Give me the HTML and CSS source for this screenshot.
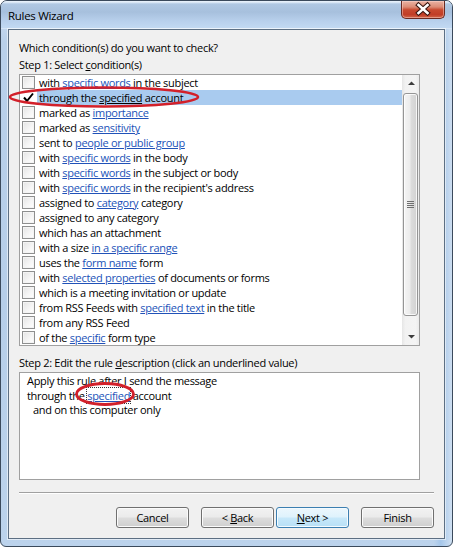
FILE: index.html
```html
<!DOCTYPE html>
<html>
<head>
<meta charset="utf-8">
<link rel="stylesheet" href="styles.css">
</head>
<body>
<div class="window">
  <div class="titlebar">
    <span class="title">Rules Wizard</span>
    <div class="close">
      <svg width="44" height="18" viewBox="0 0 44 18">
        <path d="M17.5 5 L26.5 13 M26.5 5 L17.5 13" stroke="#3a1610" stroke-width="4.6" stroke-linecap="square" fill="none"/>
        <path d="M17.5 5 L26.5 13 M26.5 5 L17.5 13" stroke="#ffffff" stroke-width="2.6" stroke-linecap="square" fill="none"/>
      </svg>
    </div>
  </div>
  <div class="client">
    <div class="line">Which condition(s) do you want to check?</div>
    <div class="line step1">Step 1: Select <u>c</u>ondition(s)</div>
    <div class="listbox">
      <div class="items">
        <div class="row"><span class="cb"></span><span class="txt">with <span class="lk">specific words</span> in the subject</span></div>
        <div class="row sel"><span class="cb checked"><svg width="13" height="13" viewBox="0 0 13 13"><path d="M2 6.5 L5 10 L11 2.5" stroke="#000" stroke-width="2" fill="none"/></svg></span><span class="txt">through the <u>specified</u> account</span></div>
        <div class="row"><span class="cb"></span><span class="txt">marked as <span class="lk">importance</span></span></div>
        <div class="row"><span class="cb"></span><span class="txt">marked as <span class="lk">sensitivity</span></span></div>
        <div class="row"><span class="cb"></span><span class="txt">sent to <span class="lk">people or public group</span></span></div>
        <div class="row"><span class="cb"></span><span class="txt">with <span class="lk">specific words</span> in the body</span></div>
        <div class="row"><span class="cb"></span><span class="txt">with <span class="lk">specific words</span> in the subject or body</span></div>
        <div class="row"><span class="cb"></span><span class="txt">with <span class="lk">specific words</span> in the recipient's address</span></div>
        <div class="row"><span class="cb"></span><span class="txt">assigned to <span class="lk">category</span> category</span></div>
        <div class="row"><span class="cb"></span><span class="txt">assigned to any category</span></div>
        <div class="row"><span class="cb"></span><span class="txt">which has an attachment</span></div>
        <div class="row"><span class="cb"></span><span class="txt">with a size <span class="lk">in a specific range</span></span></div>
        <div class="row"><span class="cb"></span><span class="txt">uses the <span class="lk">form name</span> form</span></div>
        <div class="row"><span class="cb"></span><span class="txt">with <span class="lk">selected properties</span> of documents or forms</span></div>
        <div class="row"><span class="cb"></span><span class="txt">which is a meeting invitation or update</span></div>
        <div class="row"><span class="cb"></span><span class="txt">from RSS Feeds with <span class="lk">specified text</span> in the title</span></div>
        <div class="row"><span class="cb"></span><span class="txt">from any RSS Feed</span></div>
        <div class="row"><span class="cb"></span><span class="txt">of the <span class="lk">specific</span> form type</span></div>
      </div>
      <div class="scrollbar">
        <div class="sb-btn"><svg width="17" height="17" viewBox="0 0 17 17"><path d="M6 10 L9.5 6.5 L13 10 Z" fill="#3c3c3c"/></svg></div>
        <div class="thumb">
          <svg width="7" height="7" viewBox="0 0 7 7"><path d="M0 0.5 H7 M0 2.5 H7 M0 4.5 H7 M0 6.5 H7" stroke="#6f6f6f" stroke-width="1"/></svg>
        </div>
        <div class="track"></div>
        <div class="sb-btn"><svg width="17" height="17" viewBox="0 0 17 17"><path d="M6 7 L9.5 10.5 L13 7 Z" fill="#3c3c3c"/></svg></div>
      </div>
    </div>
    <div class="line step2">Step 2: Edit the rule <u>d</u>escription (click an underlined value)</div>
    <div class="desc">
      <div>Apply this rule after I send the message</div>
      <div>through the <span class="lk focus">specified</span> account</div>
      <div class="indent">and on this computer only</div>
    </div>
    <div class="sep"></div>
    <div class="buttons">
      <div class="btn"><span>Cancel</span></div>
      <div class="btn back"><span>&lt; <u>B</u>ack</span></div>
      <div class="btn next default"><span><u>N</u>ext &gt;</span></div>
      <div class="btn finish"><span>Finish</span></div>
    </div>
  </div>
  <svg class="mark mark1" width="196" height="26" viewBox="0 0 196 26"><ellipse cx="97" cy="13" rx="94" ry="9.5" fill="none" stroke="#d2202a" stroke-width="2.6"/></svg>
  <svg class="mark mark2" width="66" height="30" viewBox="0 0 66 30"><ellipse cx="33" cy="15" rx="28.5" ry="10.5" fill="none" stroke="#d2202a" stroke-width="2.8"/></svg>
</div>
</body>
</html>
```

FILE: styles.css
```css
html, body {
  margin: 0;
  padding: 0;
  background: #ffffff;
}
body {
  font-family: "Open Sans", "Noto Sans", sans-serif;
  font-size: 11px;
  letter-spacing: -0.3px;
  color: #000;
}
.window {
  position: relative;
  width: 453px;
  height: 547px;
  box-sizing: border-box;
  border: 1px solid #3b4a5c;
  border-radius: 7px 7px 6px 6px;
  background:
    linear-gradient(to right, rgba(255,255,255,0) 0, rgba(255,255,255,0) 96%, rgba(150,190,232,0.6) 97.5%, rgba(255,255,255,0.3) 100%),
    linear-gradient(to bottom, #d2e2f3 0, #b9d0ea 40px, #b6cee9 300px, #bcd3ec 100%);
  display: flex;
  flex-direction: column;
  overflow: hidden;
}
.titlebar {
  height: 28px;
  flex: none;
  display: flex;
  align-items: flex-start;
  padding-left: 7px;
  background: linear-gradient(to bottom, #e6f0fa 0, #e6f0fa 1px, #b0c8e3 3px, #a7c0dd 11px, #b8d0ec 20px, #c2d9f2 27px, #e9f2fb 28px);
}
.title {
  padding-top: 7px;
  line-height: 15px;
  font-size: 11.5px;
  color: #000;
}
.close {
  margin-left: auto;
  margin-right: 7px;
  width: 44px;
  height: 18px;
  box-sizing: border-box;
  border: 1px solid #6a2a22;
  border-top: none;
  border-radius: 0 0 5px 5px;
  background: linear-gradient(to bottom, #eab3a4 0, #dc8c76 35%, #c8492f 52%, #c13d26 80%, #d2674a 100%);
  box-shadow: inset 0 0 0 1px rgba(255,220,210,0.45);
  overflow: hidden;
}
.close svg {
  display: block;
  margin: -1px 0 0 -1px;
}
.client {
  flex: 1;
  margin: 0 7px 7px 7px;
  border: 1px solid #5d6f83;
  box-shadow: 0 0 0 1px rgba(255,255,255,0.55);
  background: #f0f0f0;
  padding: 10px 10px 0 10px;
}
.line {
  line-height: 15px;
  white-space: nowrap;
}
.step1 {
  margin-top: 2px;
}
.listbox {
  margin-top: 2px;
  width: 401px;
  height: 272px;
  box-sizing: border-box;
  border: 1px solid #a0a0a0;
  background: #ffffff;
  display: flex;
}
.items {
  flex: 1;
}
.row {
  height: 15px;
  display: flex;
  align-items: center;
  white-space: nowrap;
}
.cb {
  flex: none;
  margin-left: 2px;
  width: 13px;
  height: 13px;
  box-sizing: border-box;
  border: 1px solid #8e8f8f;
  background: linear-gradient(135deg, #e4e4e4 0, #f6f6f6 60%, #ffffff 100%);
  box-shadow: inset 0 0 0 1px #f4f4f4;
}
.cb.checked {
  border-color: transparent;
  background: #ffffff;
  box-shadow: none;
}
.cb svg {
  display: block;
  margin: -1px;
}
.txt {
  flex: 1;
  margin-left: 2px;
  padding-left: 2px;
  line-height: 15px;
  height: 15px;
}
.row.sel .txt {
  background: #a9cbef;
}
.lk {
  color: #2152b8;
  text-decoration: underline;
}
.scrollbar {
  width: 17px;
  flex: none;
  display: flex;
  flex-direction: column;
  background: linear-gradient(to right, #e6e6e6 0, #f2f2f2 20%, #f4f4f4 80%, #ebebeb 100%);
}
.sb-btn {
  height: 17px;
  flex: none;
}
.sb-btn svg {
  display: block;
}
.thumb {
  margin: 1px 0 0 1px;
  width: 15px;
  height: 223px;
  box-sizing: border-box;
  border: 1px solid #959595;
  border-radius: 3px;
  background: linear-gradient(to right, #f5f5f5 0, #ececec 45%, #dcdcdc 55%, #d2d2d2 100%);
  box-shadow: inset 0 0 0 1px rgba(255,255,255,0.8);
  display: flex;
  align-items: center;
  justify-content: center;
}
.thumb svg {
  display: block;
}
.track {
  flex: 1;
}
.step2 {
  margin-top: 9px;
}
.desc {
  margin-top: 2px;
  width: 401px;
  height: 108px;
  box-sizing: border-box;
  border: 1px solid #a0a0a0;
  background: #ffffff;
  padding: 1px 7px;
  line-height: 14.5px;
  white-space: nowrap;
}
.indent {
  padding-left: 6px;
}
.focus {
  outline: 1px dotted #333;
  outline-offset: 0;
}
.sep {
  margin-top: 12px;
  height: 0;
  border-top: 1px solid #a0a0a0;
  border-bottom: 1px solid #ffffff;
}
.buttons {
  margin-top: 13px;
  display: flex;
  justify-content: flex-end;
}
.btn {
  width: 73px;
  height: 21px;
  box-sizing: border-box;
  border: 1px solid #707070;
  border-radius: 3px;
  background: linear-gradient(to bottom, #f2f2f2 0, #ebebeb 48%, #dddddd 52%, #cfcfcf 100%);
  box-shadow: inset 0 0 0 1px #fbfbfb;
  display: flex;
  align-items: center;
  justify-content: center;
  line-height: 15px;
  white-space: pre;
}
.back {
  margin-left: 12px;
}
.next {
  margin-left: 2px;
}
.finish {
  margin-left: 12px;
}
.btn.default {
  border-color: #3c7fb1;
  background: linear-gradient(to bottom, #ecf7fd 0, #dff2fc 48%, #c7e8fa 52%, #b8e0f6 100%);
  box-shadow: inset 0 0 0 1px #f4fbff;
}
.mark {
  position: absolute;
  display: block;
}
.mark1 {
  left: 6px;
  top: 83px;
}
.mark2 {
  left: 71px;
  top: 378px;
}
```
